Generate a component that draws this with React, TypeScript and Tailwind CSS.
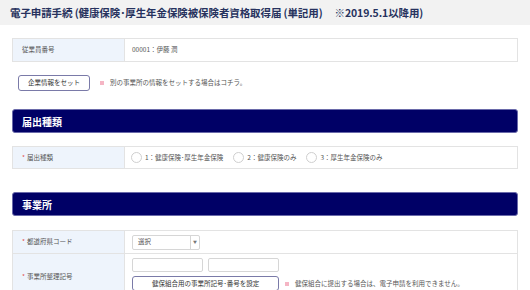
import React from 'react'

const font = { fontFamily: '"Noto Sans CJK JP", "Liberation Sans", sans-serif' }

function Req() {
  return <span className="text-[#e24b4b] mr-[2px]">*</span>
}

function Mark() {
  return <span className="inline-block w-[4px] h-[4px] bg-[#f5b5c4]" />
}

function Radio({ label }: { label: string }) {
  return (
    <label className="flex items-center gap-[3px]">
      <span className="w-[11px] h-[11px] rounded-full border border-[#cfcfcf] bg-white" />
      <span>{label}</span>
    </label>
  )
}

function Section({ title }: { title: string }) {
  return (
    <div className="mx-[12px] h-[24px] rounded-[3px] bg-[#000066] border border-[#6a6aaa] flex items-center px-[9px] text-white text-[10px] font-bold">
      {title}
    </div>
  )
}

export default function App() {
  return (
    <div className="w-[530px] h-[290px] overflow-hidden bg-white text-[#555] text-[6.5px]" style={font}>
      <div className="h-[25px] bg-[#f2f2f2] flex items-center px-[10px] text-[10.5px] font-bold text-[#27325e] tracking-[-0.1px]">
        電子申請手続 (健康保険･厚生年金保険被保険者資格取得届 (単記用)
        <span className="ml-[12px]">※2019.5.1以降用)</span>
      </div>

      <div className="mx-[12px] mt-[13px] border border-[#e3e3e3] flex h-[24px]">
        <div className="w-[112px] bg-[#eef4fc] border-r border-[#e3e3e3] flex items-center pl-[9px]">従業員番号</div>
        <div className="flex items-center pl-[7px]">00001：伊藤 潤</div>
      </div>

      <div className="flex items-center mt-[13px] ml-[18px]">
        <button className="w-[72px] h-[16px] rounded-[3px] border border-[#7a7aa8] bg-white text-[6.5px] text-[#333]">企業情報をセット</button>
        <span className="ml-[10px]"><Mark /></span>
        <span className="ml-[6px]">別の事業所の情報をセットする場合はコチラ。</span>
      </div>

      <div className="mt-[18px]">
        <Section title="届出種類" />
      </div>

      <div className="mx-[12px] mt-[13px] border border-[#e3e3e3] flex h-[23px]">
        <div className="w-[112px] bg-[#eef4fc] border-r border-[#e3e3e3] flex items-center pl-[9px]"><Req />届出種類</div>
        <div className="flex items-center pl-[6px] gap-[10px]">
          <Radio label="1：健康保険･厚生年金保険" />
          <Radio label="2：健康保険のみ" />
          <Radio label="3：厚生年金保険のみ" />
        </div>
      </div>

      <div className="mt-[23px]">
        <Section title="事業所" />
      </div>

      <div className="mx-[12px] mt-[14px] border border-[#e3e3e3]">
        <div className="flex h-[23px] border-b border-[#e3e3e3]">
          <div className="w-[112px] bg-[#eef4fc] border-r border-[#e3e3e3] flex items-center pl-[9px]"><Req />都道府県コード</div>
          <div className="flex items-center pl-[7px]">
            <div className="w-[68px] h-[15px] border border-[#d6d6d6] rounded-[2px] flex items-center">
              <span className="flex-1 pl-[5px]">選択</span>
              <span className="w-[9px] h-full border-l border-[#d6d6d6] flex items-center justify-center text-[4px] text-[#777]">▼</span>
            </div>
          </div>
        </div>
        <div className="flex h-[45px]">
          <div className="w-[112px] bg-[#eef4fc] border-r border-[#e3e3e3] flex items-center pl-[9px]"><Req />事業所整理記号</div>
          <div className="pl-[7px] pt-[4px] flex flex-col gap-[4px]">
            <div className="flex gap-[5px]">
              <div className="w-[71px] h-[14px] border border-[#d6d6d6] rounded-[2px]" />
              <div className="w-[71px] h-[14px] border border-[#d6d6d6] rounded-[2px]" />
            </div>
            <div className="flex items-center">
              <button className="w-[147px] h-[15px] rounded-[3px] border border-[#7a7aa8] bg-white text-[6.5px] text-[#333]">健保組合用の事業所記号･番号を設定</button>
              <span className="ml-[6px]"><Mark /></span>
              <span className="ml-[6px]">健保組合に提出する場合は、電子申請を利用できません。</span>
            </div>
          </div>
        </div>
      </div>
    </div>
  )
}
